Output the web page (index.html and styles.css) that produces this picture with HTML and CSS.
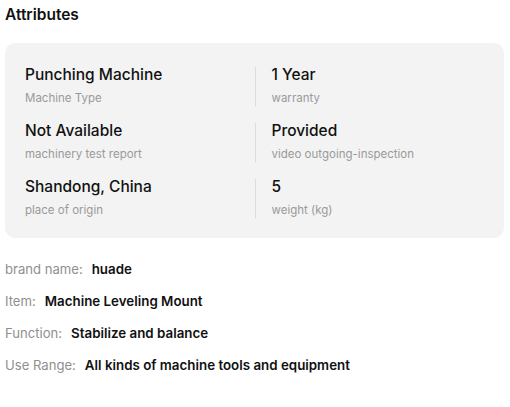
FILE: index.html
```html
<!DOCTYPE html>
<html lang="en">
<head>
<meta charset="utf-8">
<title>Attributes</title>
<link rel="stylesheet" href="styles.css">
</head>
<body>
<section class="attrs">
  <h2 class="title">Attributes</h2>
  <div class="card">
    <div class="item"><div class="value">Punching Machine</div><div class="label">Machine Type</div></div>
    <div class="item right"><div class="value">1 Year</div><div class="label">warranty</div></div>
    <div class="item"><div class="value">Not Available</div><div class="label">machinery test report</div></div>
    <div class="item right"><div class="value">Provided</div><div class="label">video outgoing-inspection</div></div>
    <div class="item"><div class="value">Shandong, China</div><div class="label">place of origin</div></div>
    <div class="item right"><div class="value">5</div><div class="label">weight (kg)</div></div>
  </div>
  <ul class="list">
    <li><span class="k">brand name:</span><span class="v">huade</span></li>
    <li><span class="k">Item:</span><span class="v">Machine Leveling Mount</span></li>
    <li><span class="k">Function:</span><span class="v">Stabilize and balance</span></li>
    <li><span class="k">Use Range:</span><span class="v">All kinds of machine tools and equipment</span></li>
  </ul>
</section>
</body>
</html>
```
FILE: styles.css
```css
* { box-sizing: border-box; }
html, body { margin: 0; background: #fff; }
body {
  padding: 5px;
  font-family: Inter, "Noto Sans", sans-serif;
  color: #111;
}
.title {
  margin: 0;
  font-size: 15.5px;
  line-height: 20px;
  font-weight: 600;
  color: #111;
}
.card {
  margin-top: 18px;
  width: 499px;
  background: #f3f3f3;
  border-radius: 10px;
  padding: 24px 20px 20px;
  display: grid;
  grid-template-columns: 1fr 1fr;
  row-gap: 17px;
}
.item {
  display: flex;
  flex-direction: column;
  gap: 7px;
}
.item.right {
  border-left: 1px solid #dcdcdc;
  padding-left: 16px;
}
.value {
  font-size: 15.5px;
  line-height: 16px;
  font-weight: 500;
  color: #111;
}
.label {
  font-size: 11.5px;
  line-height: 16px;
  color: #9a9a9a;
}
.list {
  list-style: none;
  margin: 21px 0 0;
  padding: 0;
  display: flex;
  flex-direction: column;
  gap: 12px;
}
.list li {
  display: flex;
  align-items: baseline;
  gap: 9px;
  line-height: 20px;
}
.k { color: #8f8f8f; font-size: 13.1px; }
.v { font-weight: 600; color: #111; font-size: 13.35px; }
```
